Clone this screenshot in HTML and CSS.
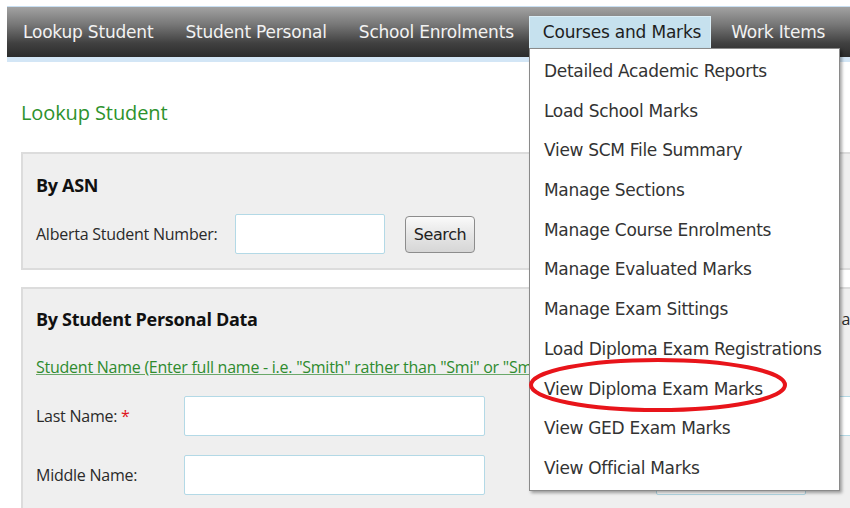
FILE: index.html
```html
<!DOCTYPE html>
<html lang="en">
<head>
<meta charset="utf-8">
<title>Lookup Student</title>
<link rel="stylesheet" href="styles.css">
</head>
<body>
<div class="page">
  <nav class="topnav">
    <ul class="topnav-list">
      <li class="topnav-item">Lookup Student</li>
      <li class="topnav-item">Student Personal</li>
      <li class="topnav-item">School Enrolments</li>
      <li class="topnav-item is-open">Courses and Marks</li>
      <li class="topnav-item">Work Items</li>
    </ul>
  </nav>
  <div class="topnav-strip"></div>

  <main class="content">
    <h1 class="page-title">Lookup Student</h1>

    <section class="panel panel-asn">
      <h2 class="panel-title">By ASN</h2>
      <div class="field-row">
        <label class="field-label label-asn">Alberta Student Number:</label>
        <input class="text-input input-asn" type="text">
        <button class="btn" type="button">Search</button>
      </div>
    </section>

    <section class="panel panel-personal">
      <div class="panel-head">
        <h2 class="panel-title">By Student Personal Data</h2>
        <span class="side-note">Birth Date and Gender</span>
      </div>
      <a class="hint-link" href="#">Student Name (Enter full name - i.e. "Smith" rather than "Smi" or "Sm")</a>
      <div class="field-row">
        <label class="field-label label-name">Last Name: <span class="req">*</span></label>
        <input class="text-input input-name" type="text">
        <input class="text-input input-side-wide" type="text">
      </div>
      <div class="field-row">
        <label class="field-label label-name">Middle Name:</label>
        <input class="text-input input-name" type="text">
        <input class="text-input input-side" type="text">
      </div>
    </section>
  </main>

  <ul class="dropdown">
    <li class="dropdown-item">Detailed Academic Reports</li>
    <li class="dropdown-item">Load School Marks</li>
    <li class="dropdown-item">View SCM File Summary</li>
    <li class="dropdown-item">Manage Sections</li>
    <li class="dropdown-item">Manage Course Enrolments</li>
    <li class="dropdown-item">Manage Evaluated Marks</li>
    <li class="dropdown-item">Manage Exam Sittings</li>
    <li class="dropdown-item">Load Diploma Exam Registrations</li>
    <li class="dropdown-item">View Diploma Exam Marks</li>
    <li class="dropdown-item">View GED Exam Marks</li>
    <li class="dropdown-item">View Official Marks</li>
  </ul>

  <svg class="highlight-ring" width="262" height="58" viewBox="0 0 262 58">
    <ellipse cx="131" cy="29" rx="127" ry="25" fill="none" stroke="#e8141a" stroke-width="4"/>
  </svg>
</div>
</body>
</html>
```

FILE: styles.css
```css
* {
  box-sizing: border-box;
}

html, body {
  margin: 0;
  padding: 0;
  background: #ffffff;
  overflow: hidden;
}

.page {
  position: relative;
  width: 850px;
  height: 508px;
  padding-top: 6px;
  overflow: hidden;
}

/* top navigation */
.topnav {
  margin-left: 7px;
  width: 900px;
  border-top: 1px solid #c9dff2;
  height: 51px;
  background: linear-gradient(#a2a2a2 0%, #777 35%, #414141 72%, #2c2c2c 100%);
}

.topnav-list {
  list-style: none;
  margin: 0;
  padding: 9px 0 0;
  display: flex;
  align-items: flex-start;
  height: 50px;
}

.topnav-item {
  flex-shrink: 0;
  height: 32px;
  line-height: 33px;
  padding: 0 16px;
  font-family: "DejaVu Sans", Verdana, sans-serif;
  font-size: 17px;
  letter-spacing: -0.2px;
  color: #f2f2f2;
  white-space: nowrap;
}

.topnav-item.is-open {
  background: #c6e1ee;
  border: 1px solid #dbeef7;
  border-bottom: none;
  color: #1e1e1e;
  padding: 0 9px 0 13px;
  margin-left: -1px;
  margin-right: 4px;
  line-height: 31px;
}

.topnav-strip {
  margin-left: 7px;
  height: 5px;
  background: #d3e6f6;
}

/* page body */
.content {
  padding: 38px 0 0 21px;
  width: 900px;
  font-family: "Open Sans", "Noto Sans", sans-serif;
}

.page-title {
  margin: 0 0 26px;
  font-size: 20px;
  font-weight: 400;
  line-height: 26px;
  color: #2d922d;
  letter-spacing: -0.1px;
}

.panel {
  background: #efefef;
  border: 2px solid #dcdcdc;
  padding: 0 0 0 13px;
}

.panel-asn {
  height: 118px;
  padding-top: 19px;
}

.panel-personal {
  margin-top: 17px;
  padding-top: 18px;
  height: 240px;
}

.panel-title {
  flex-shrink: 0;
  margin: 0;
  font-size: 18px;
  font-weight: 700;
  line-height: 24px;
  color: #111;
  letter-spacing: -0.3px;
  white-space: nowrap;
}

.field-row {
  display: flex;
  align-items: center;
}

.field-row > * {
  flex-shrink: 0;
}

.panel-asn .field-row {
  margin-top: 17px;
}

.field-label {
  font-size: 16px;
  color: #2a2a2a;
  letter-spacing: -0.25px;
  white-space: nowrap;
}

.label-asn {
  width: 199px;
}

.label-name {
  width: 148px;
}

.req {
  color: #e0141a;
}

.text-input {
  height: 40px;
  border: 1px solid #b3d9e6;
  background: #fff;
  border-radius: 2px;
  padding: 0 4px;
  font: inherit;
}

.input-asn {
  width: 150px;
}

.btn {
  margin-left: 20px;
  width: 70px;
  height: 37px;
  border: 1px solid #8c8c8c;
  border-radius: 4px;
  background: linear-gradient(#fafafa, #e6e6e6 50%, #d6d6d6);
  font-family: "DejaVu Sans", Verdana, sans-serif;
  font-size: 16px;
  letter-spacing: -0.4px;
  color: #222;
  padding: 0;
}

.panel-head {
  display: flex;
  align-items: center;
  white-space: nowrap;
}

.side-note {
  flex-shrink: 0;
  margin-left: 504px;
  font-size: 16px;
  color: #2a2a2a;
}

.hint-link {
  display: block;
  margin-top: 26px;
  font-size: 16px;
  line-height: 20px;
  color: #2e8b2e;
  text-decoration: underline;
  text-decoration-color: #6aa86a;
  letter-spacing: -0.25px;
  white-space: nowrap;
}

.panel-personal .field-row {
  margin-top: 19px;
}

.input-name {
  width: 301px;
}

.input-side-wide {
  margin-left: 330px;
  width: 200px;
}

.input-side {
  margin-left: 171px;
  width: 150px;
}

/* open menu under "Courses and Marks" */
.dropdown {
  position: absolute;
  left: 529px;
  top: 48px;
  width: 311px;
  height: 443px;
  margin: 0;
  padding: 2px 0 0;
  list-style: none;
  background: #fff;
  border: 1px solid #8a8a8a;
  box-shadow: 2px 2px 3px rgba(0, 0, 0, 0.35);
}

.dropdown-item {
  height: 39.7px;
  line-height: 40px;
  padding-left: 14px;
  font-family: "DejaVu Sans", Verdana, sans-serif;
  font-size: 17px;
  letter-spacing: -0.3px;
  color: #333;
  white-space: nowrap;
}

.highlight-ring {
  position: absolute;
  left: 527px;
  top: 356px;
}
```
